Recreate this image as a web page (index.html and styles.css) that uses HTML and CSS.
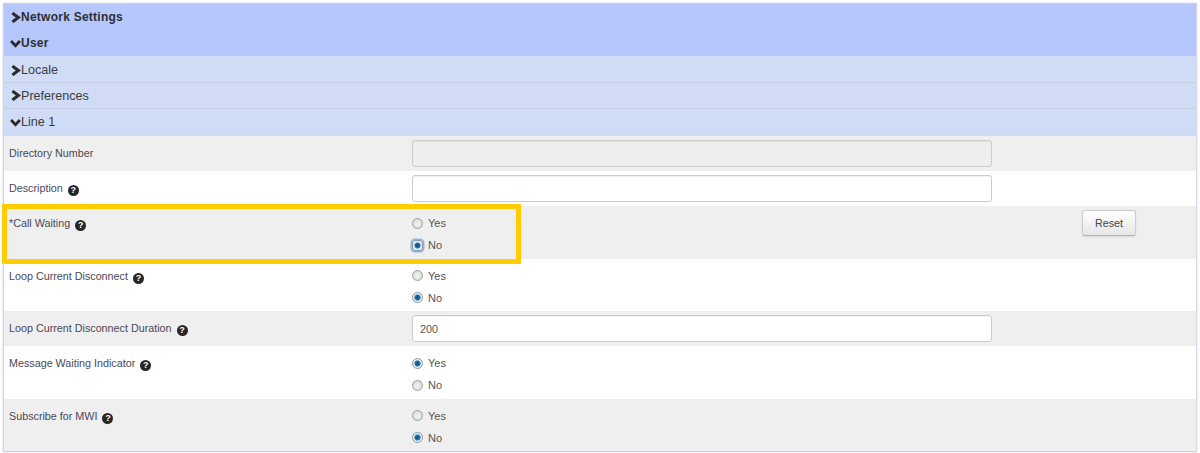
FILE: index.html
```html
<!DOCTYPE html>
<html lang="en">
<head>
<meta charset="utf-8">
<title>Line settings</title>
<link rel="stylesheet" href="styles.css">
</head>
<body>
<svg class="defs" width="0" height="0" aria-hidden="true">
  <symbol id="right" viewBox="0 0 10 10"><path d="M2.2 1 L7.6 5 L2.2 9" fill="none" stroke="currentColor" stroke-width="2.8"/></symbol>
  <symbol id="down" viewBox="0 0 10 10"><path d="M1 2.8 L5 7 L9 2.8" fill="none" stroke="currentColor" stroke-width="2.6"/></symbol>
</svg>
<main class="panel">
  <div class="head major"><svg class="chev"><use href="#right"/></svg><span class="wide">Network Settings</span></div>
  <div class="head major"><svg class="chev"><use href="#down"/></svg><span class="wide">User</span></div>
  <div class="head minor"><svg class="chev"><use href="#right"/></svg><span>Locale</span></div>
  <div class="head minor"><svg class="chev"><use href="#right"/></svg><span>Preferences</span></div>
  <div class="head minor last"><svg class="chev"><use href="#down"/></svg><span>Line 1</span></div>

  <div class="row shade short">
    <div class="label">Directory Number</div>
    <div class="field"><div class="input disabled"></div></div>
  </div>
  <div class="row short">
    <div class="label">Description <i class="help">?</i></div>
    <div class="field"><div class="input"></div></div>
  </div>
  <div class="row shade tall">
    <div class="label">*Call Waiting <i class="help">?</i></div>
    <div class="field">
      <div class="radio"><i class="dot"></i>Yes</div>
      <div class="radio"><i class="dot on focus"></i>No</div>
    </div>
    <div class="action"><button class="btn" type="button">Reset</button></div>
  </div>
  <div class="row tall">
    <div class="label">Loop Current Disconnect <i class="help">?</i></div>
    <div class="field">
      <div class="radio"><i class="dot"></i>Yes</div>
      <div class="radio"><i class="dot on"></i>No</div>
    </div>
  </div>
  <div class="row shade short">
    <div class="label">Loop Current Disconnect Duration <i class="help">?</i></div>
    <div class="field"><div class="input">200</div></div>
  </div>
  <div class="row tall">
    <div class="label">Message Waiting Indicator <i class="help">?</i></div>
    <div class="field">
      <div class="radio"><i class="dot on"></i>Yes</div>
      <div class="radio"><i class="dot"></i>No</div>
    </div>
  </div>
  <div class="row shade tall">
    <div class="label">Subscribe for MWI <i class="help">?</i></div>
    <div class="field">
      <div class="radio"><i class="dot"></i>Yes</div>
      <div class="radio"><i class="dot on"></i>No</div>
    </div>
  </div>
  <div class="highlight"></div>
</main>
</body>
</html>
```

FILE: styles.css
```css
* { box-sizing: border-box; }
html, body { margin: 0; height: 453px; overflow: hidden; background: #fff; }
body { padding: 3px 3px 0 3px; font-family: "Liberation Sans", Arial, sans-serif; font-size: 10.75px; color: #444; }
.defs { position: absolute; }
.panel {
  position: relative;
  width: 1194px;
  height: 449px;
  border: 1px solid #ccd0e4;
  border-right-color: #d6d9ea;
  box-shadow: 0 0 2px rgba(170,175,210,.5);
}
.head {
  display: flex;
  align-items: center;
  height: 26px;
  padding-left: 6px;
  color: #3d3d3d;
}
.head .chev { width: 11px; height: 11px; color: #2b2b2b; flex: none; }
.major { background: #b5c7fd; font-weight: bold; color: #2f2f2f; font-size: 12px; }
.wide { letter-spacing: .25px; }
.minor { background: #d0dcf6; border-top: 1px solid #c6cfdf; font-size: 12.6px; }
.major + .minor { border-top: 0; padding-top: 2px; }
.minor.last { height: 27px; }
.row { display: flex; background: #fff; }
.shade { background: #efefef; }
.short { height: 35px; }
.tall { height: 52.5px; }
.head + .row { border-top: 1px solid #d8d8dc; height: 36px; }
.label { width: 408px; flex: none; padding: 11px 0 0 5px; line-height: 13px; color: #4c4854; }
.field { width: 580px; flex: none; }
.short .field { padding-top: 4px; }
.tall .field { padding-top: 6px; }
.input {
  height: 27px;
  border: 1px solid #ccc;
  border-radius: 3px;
  background: #fff;
  padding: 0 7px;
  line-height: 26px;
  font-size: 10.75px;
  color: #555;
  box-shadow: inset 0 1px 1px rgba(0,0,0,.06);
}
.disabled { background: #eee; }
.radio { display: flex; align-items: center; height: 22px; color: #555; font-size: 11px; }
.dot {
  width: 11px;
  height: 11px;
  margin: 0 5px 0 0;
  border-radius: 50%;
  border: 1px solid #a0a0a0;
  background: radial-gradient(circle at 50% 55%, #f4f4f4 0, #e2e2e2 55%, #c8c8c8 100%);
  flex: none;
}
.dot.on { background: radial-gradient(circle, #0c4f82 0, #1d78b3 42%, #f2f2f2 55%, #d8d8d8 100%); border-color: #8a97a6; }
.dot.focus { box-shadow: 0 0 0 1.5px #8db4ee; border-radius: 3px; }
.help {
  display: inline-block;
  width: 11px;
  height: 11px;
  margin-left: 2px;
  border-radius: 50%;
  background: #262626;
  color: #fff;
  font: bold 9px/11px "Liberation Sans", Arial, sans-serif;
  text-align: center;
  vertical-align: -1px;
}
.action { flex: 1; padding: 4px 0 0 90px; }
.btn {
  width: 54px;
  height: 26px;
  padding: 0;
  border: 1px solid #ccc;
  border-bottom-color: #b3b3b3;
  border-radius: 3px;
  background: linear-gradient(#fff, #e6e6e6);
  box-shadow: 0 1px 2px rgba(0,0,0,.1);
  font: 10.75px "Liberation Sans", Arial, sans-serif;
  color: #444;
}
.highlight {
  position: absolute;
  left: -2px;
  top: 200px;
  width: 519px;
  height: 60px;
  border: 5px solid #fc0;
  pointer-events: none;
}
```
